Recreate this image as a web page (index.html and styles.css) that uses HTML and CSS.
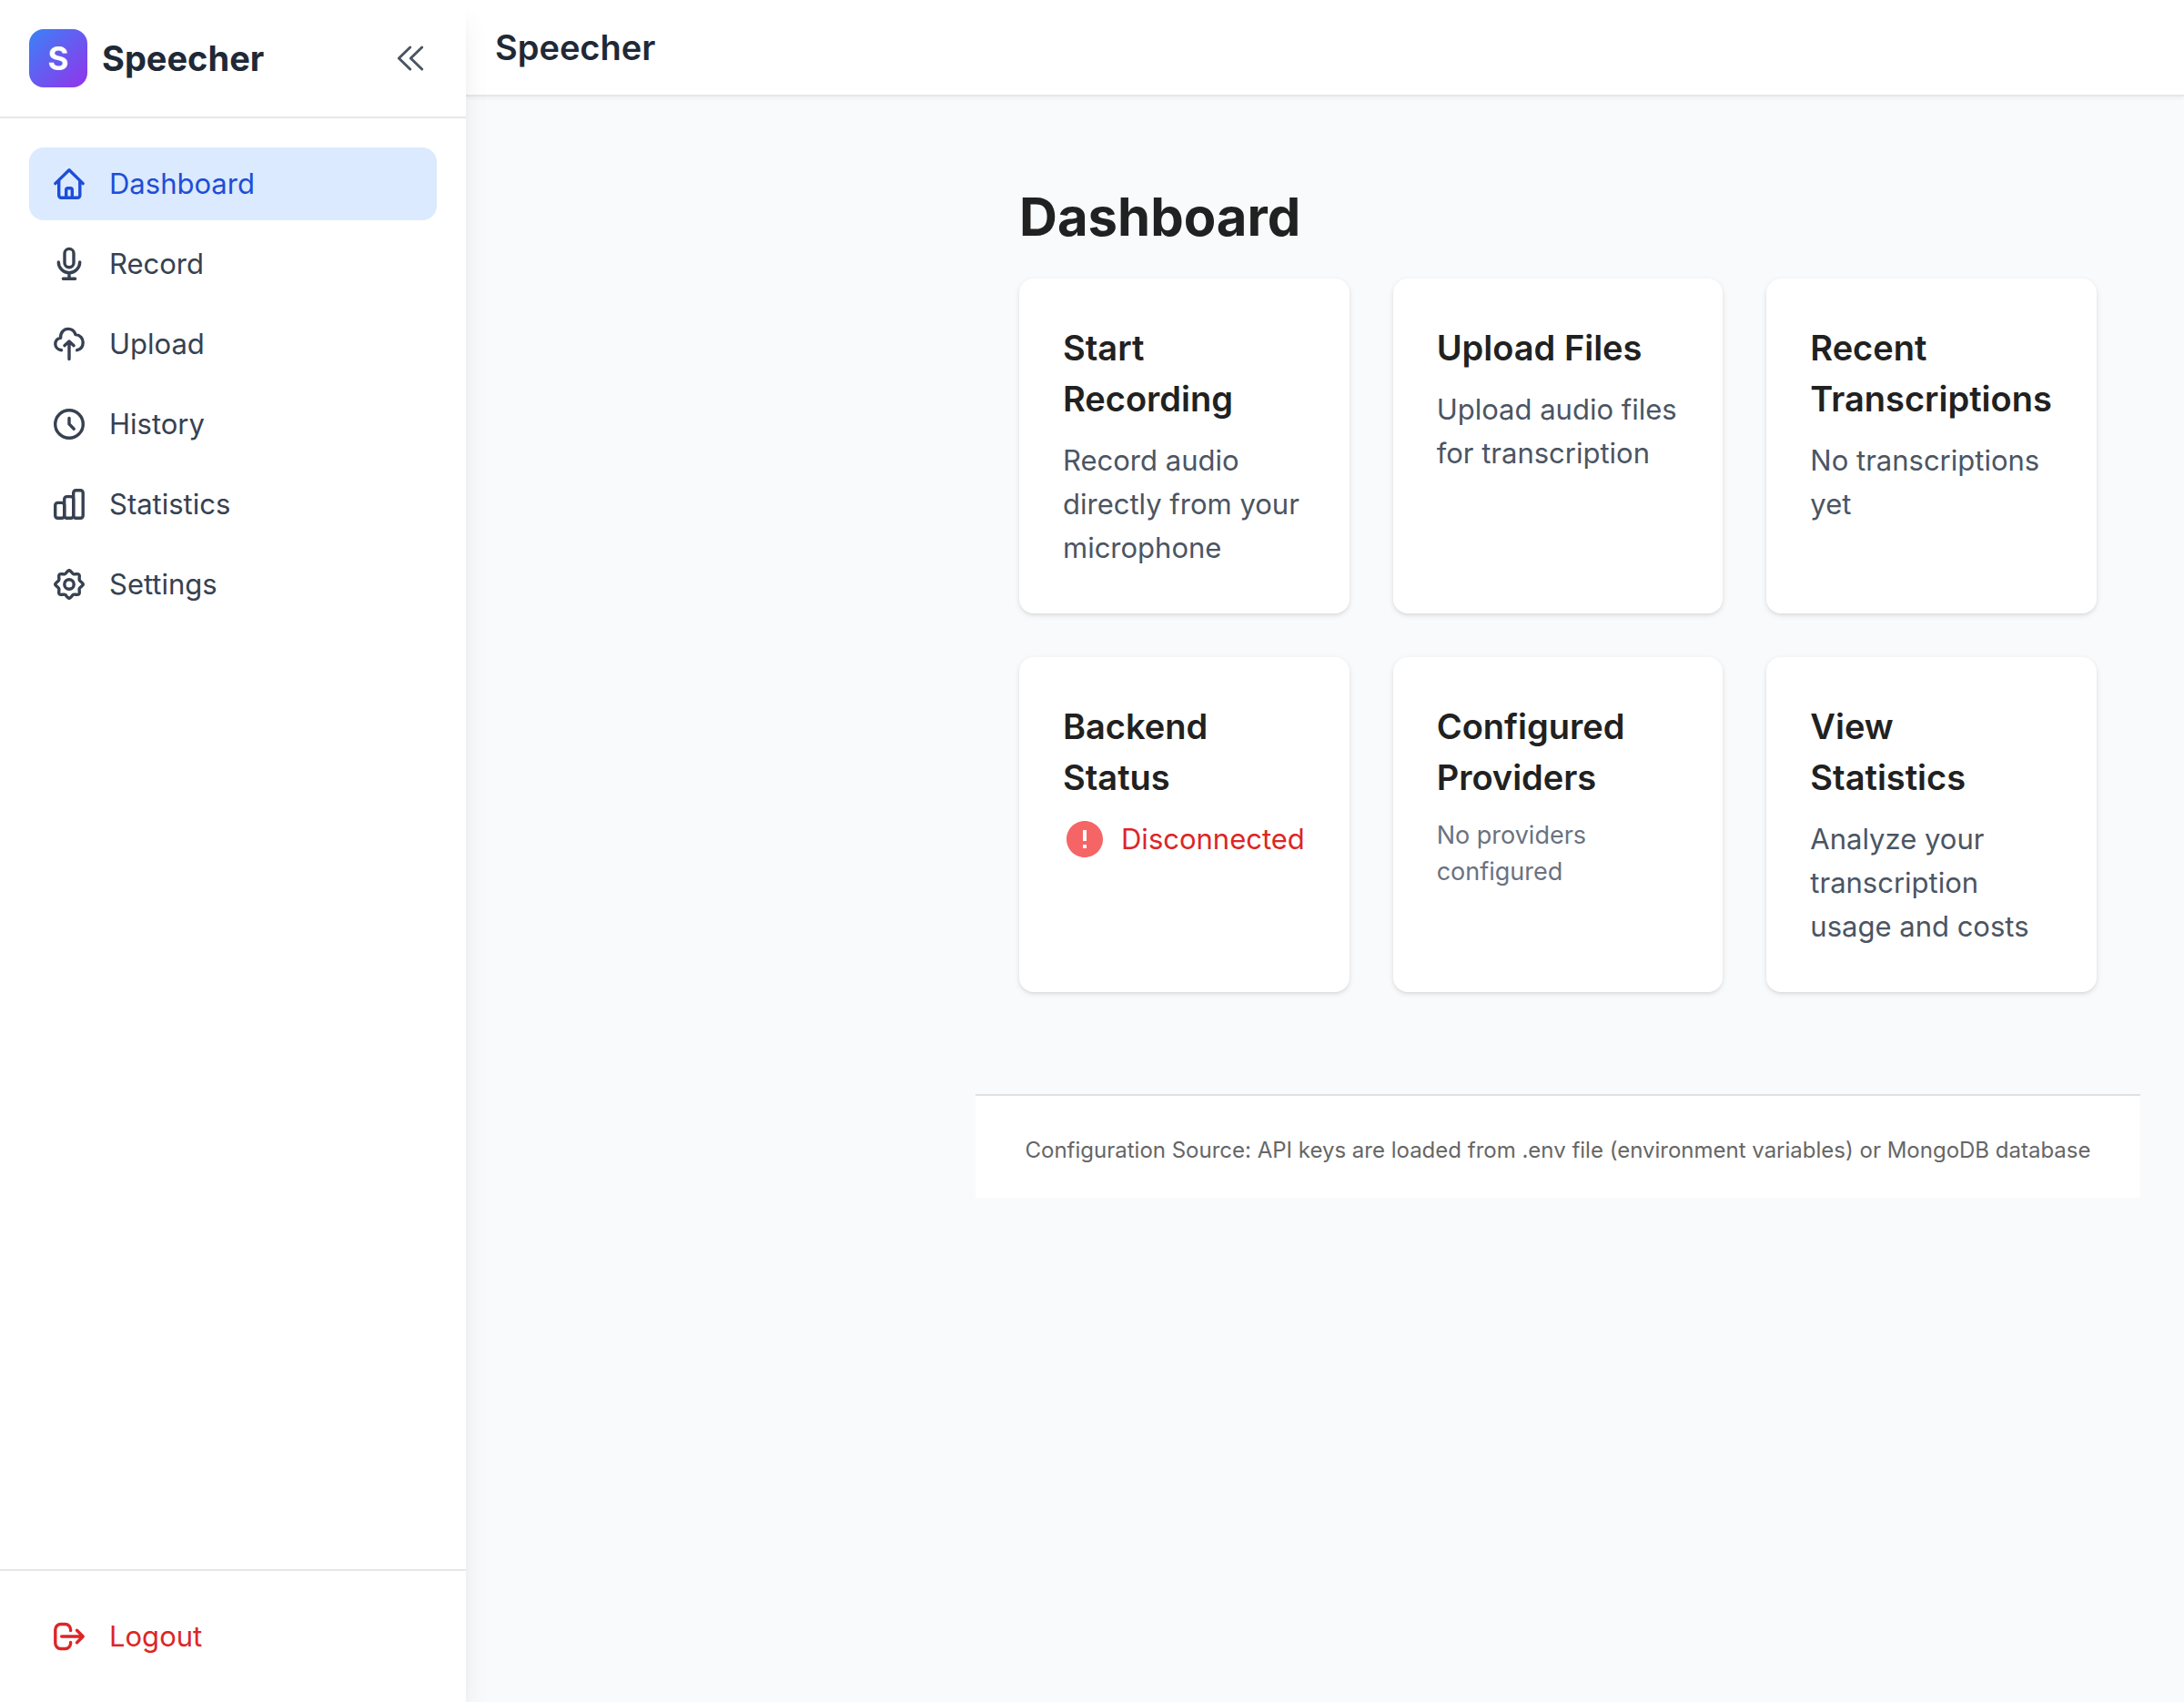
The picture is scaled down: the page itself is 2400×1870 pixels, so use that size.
FILE: index.html
```html
<!DOCTYPE html>
<html lang="en">
<head>
<meta charset="utf-8">
<title>Speecher</title>
<link rel="stylesheet" href="styles.css">
</head>
<body>
<div class="app">
  <aside class="sidebar">
    <div class="sidebar-head">
      <div class="brand">
        <span class="logo" aria-hidden="true">S</span>
        <span class="brand-name">Speecher</span>
      </div>
      <button class="collapse" type="button" aria-label="Collapse sidebar">
        <svg class="icon icon-thin" viewBox="0 0 40 40"><path d="M18.7 8L6.3 20l12.4 12M31.7 8L19.3 20l12.4 12"/></svg>
      </button>
    </div>
    <nav class="nav">
      <a class="nav-item active" href="#dashboard" aria-current="page">
        <svg class="icon" viewBox="0 0 40 40"><path d="M4.8 19.6L20 4.7l15.2 14.9M8.7 16.5v16.3a2.5 2.5 0 0 0 2.5 2.5h18.1a2.5 2.5 0 0 0 2.5-2.5V16.5M16.7 35.3v-8.600a2 2 0 0 1 2-2h2.600a2 2 0 0 1 2 2v8.600"/></svg>
        Dashboard
      </a>
      <a class="nav-item" href="#record">
        <svg class="icon" viewBox="0 0 40 40"><rect x="15" y="3.4" width="10" height="20.3" rx="5"/><path d="M8.3 18a11.7 11.7 0 0 0 23.4 0M20 29.7v6.600M13.4 36.3h13.200"/></svg>
        Record
      </a>
      <a class="nav-item" href="#upload">
        <svg class="icon" viewBox="0 0 40 40"><path d="M11.5 26.7C7.5 26.3 4.8 23.3 4.8 20C4.8 16.5 7.3 13.7 10.6 13.3C10.3 7.5 14 3.4 18.8 3.4C22.8 3.4 25.8 6 27 9.6C32 9.8 35.2 13.8 35.2 18.2C35.2 22.5 32.5 25.7 28.7 26.7M20 36.5V17M14.9 21.7L20 17l5.1 4.7"/></svg>
        Upload
      </a>
      <a class="nav-item" href="#history">
        <svg class="icon" viewBox="0 0 40 40"><circle cx="20" cy="20" r="15.3"/><path d="M20 13.4v6.5l5.2 5.3"/></svg>
        History
      </a>
      <a class="nav-item" href="#statistics">
        <svg class="icon" viewBox="0 0 40 40"><rect x="4.7" y="18.4" width="10" height="16.9" rx="2.8"/><rect x="14.7" y="11.6" width="10" height="23.7" rx="2.8"/><rect x="24.7" y="4.7" width="10.5" height="30.6" rx="2.8"/></svg>
        Statistics
      </a>
      <a class="nav-item" href="#settings">
        <svg class="icon" viewBox="0 0 40 40">
          <defs><path id="cog" d="M20 4.8C22.2 4.8 22.82 7.96 24.67 8.73C26.5 9.5 29.2 7.7 30.75 9.25C32.3 10.8 30.5 13.5 31.27 15.33C32.04 17.18 35.2 17.8 35.2 20"/></defs>
          <use href="#cog"/><use href="#cog" transform="rotate(90 20 20)"/><use href="#cog" transform="rotate(180 20 20)"/><use href="#cog" transform="rotate(270 20 20)"/>
          <circle cx="20" cy="20" r="5.2"/>
        </svg>
        Settings
      </a>
    </nav>
    <div class="sidebar-foot">
      <button class="nav-item logout" type="button">
        <svg class="icon" viewBox="0 0 40 40"><path d="M21.6 13.5v-1a6 6 0 0 0-6-6h-4.800a6 6 0 0 0-6 6v15a6 6 0 0 0 6 6h4.800a6 6 0 0 0 6-6v-1M11.7 20h23.500M28.5 13.3l6.7 6.7-6.7 6.7"/></svg>
        Logout
      </button>
    </div>
  </aside>

  <div class="page">
    <header class="topbar">
      <h1 class="topbar-title">Speecher</h1>
    </header>
    <main class="main">
      <section class="dashboard">
        <h2 class="page-title">Dashboard</h2>
        <div class="cards">
          <article class="card">
            <h3 class="card-title">Start Recording</h3>
            <p class="card-text">Record audio directly from your microphone</p>
          </article>
          <article class="card">
            <h3 class="card-title">Upload Files</h3>
            <p class="card-text">Upload audio files for transcription</p>
          </article>
          <article class="card">
            <h3 class="card-title">Recent Transcriptions</h3>
            <p class="card-text">No transcriptions yet</p>
          </article>
          <article class="card">
            <h3 class="card-title">Backend Status</h3>
            <p class="card-text status">
              <svg class="status-icon" viewBox="0 0 24 24" aria-hidden="true"><path d="M12 2C6.48 2 2 6.48 2 12s4.48 10 10 10 10-4.48 10-10S17.52 2 12 2zm1 15h-2v-2h2v2zm0-4h-2V7h2v6z"/></svg>
              Disconnected
            </p>
          </article>
          <article class="card">
            <h3 class="card-title">Configured Providers</h3>
            <p class="card-note">No providers configured</p>
          </article>
          <article class="card">
            <h3 class="card-title">View Statistics</h3>
            <p class="card-text">Analyze your transcription usage and costs</p>
          </article>
        </div>
      </section>
      <footer class="source">Configuration Source: API keys are loaded from .env file (environment variables) or MongoDB database</footer>
    </main>
  </div>
</div>
</body>
</html>
```
FILE: styles.css
```css
* {
  box-sizing: border-box;
}

body {
  margin: 0;
  background: #f9fafb;
  color: #212121;
  font-family: Inter, "Liberation Sans", sans-serif;
  font-size: 31px;
  line-height: 48px;
}

h1, h2, h3, p {
  margin: 0;
}

button {
  border: 0;
  background: none;
  font: inherit;
  cursor: pointer;
}

.app {
  display: flex;
  min-height: 100vh;
}

/* Sidebar */
.sidebar {
  position: sticky;
  top: 0;
  z-index: 1;
  display: flex;
  flex: none;
  flex-direction: column;
  width: 512px;
  height: 100vh;
  background: #fff;
  box-shadow: 0 20px 30px -6px rgba(0, 0, 0, 0.1), 0 8px 12px -8px rgba(0, 0, 0, 0.1);
}

.sidebar-head {
  display: flex;
  align-items: center;
  justify-content: space-between;
  padding: 32px;
  border-bottom: 2px solid #e5e7eb;
}

.brand {
  display: flex;
  align-items: center;
  gap: 16px;
}

.logo {
  display: grid;
  place-items: center;
  width: 64px;
  height: 64px;
  border-radius: 16px;
  background: linear-gradient(135deg, #3b82f6, #9333ea);
  color: #fff;
  font-size: 35px;
  font-weight: 700;
}

.brand-name {
  color: #1f2937;
  font-size: 38px;
  font-weight: 700;
}

.collapse {
  display: flex;
  padding: 8px;
  color: #4b5563;
}

.icon {
  flex: none;
  width: 40px;
  height: 40px;
  fill: none;
  stroke: currentColor;
  stroke-width: 3.4;
  stroke-linecap: round;
  stroke-linejoin: round;
}

.icon-thin {
  stroke-width: 3;
}

.nav {
  display: flex;
  flex: 1;
  flex-direction: column;
  gap: 8px;
  padding: 32px;
}

.nav-item {
  display: flex;
  align-items: center;
  gap: 24px;
  padding: 16px 24px;
  border-radius: 16px;
  color: #374151;
  text-decoration: none;
}

.nav-item.active {
  background: #dbeafe;
  color: #1d4ed8;
}

.sidebar-foot {
  padding: 32px;
  border-top: 2px solid #e5e7eb;
}

.logout {
  width: 100%;
  color: #dc2626;
}

/* Page */
.page {
  flex: 1;
  min-width: 0;
}

.topbar {
  padding: 24px 32px;
  border-bottom: 2px solid #e5e7eb;
  background: #fff;
  box-shadow: 0 2px 4px rgba(0, 0, 0, 0.05);
}

.topbar-title {
  color: #1f2937;
  font-size: 38px;
  font-weight: 600;
  line-height: 56px;
}

.main {
  padding: 48px;
  margin-left: 512px;
}

.dashboard {
  padding: 48px;
}

.page-title {
  margin-bottom: 32px;
  font-size: 58px;
  font-weight: 700;
  line-height: 72px;
}

.cards {
  display: grid;
  grid-template-columns: repeat(3, minmax(0, 1fr));
  gap: 48px;
}

.card {
  padding: 48px;
  border-radius: 16px;
  background: #fff;
  box-shadow: 0 2px 6px rgba(0, 0, 0, 0.1), 0 2px 4px -2px rgba(0, 0, 0, 0.1);
}

.card-title {
  margin-bottom: 16px;
  font-size: 38px;
  font-weight: 600;
  line-height: 56px;
}

.card-text {
  color: #4b5563;
}

.card-note {
  color: #6b7280;
  font-size: 27px;
  line-height: 40px;
}

.status {
  display: flex;
  align-items: center;
  gap: 16px;
  color: #dc2626;
}

.status-icon {
  flex: none;
  width: 48px;
  height: 48px;
  fill: #f66565;
}

.source {
  margin-top: 64px;
  padding: 40px 32px 32px;
  border-top: 2px solid #e0e0e0;
  background: #fff;
  color: #666;
  font-size: 24px;
  line-height: 40px;
  text-align: center;
}
```
